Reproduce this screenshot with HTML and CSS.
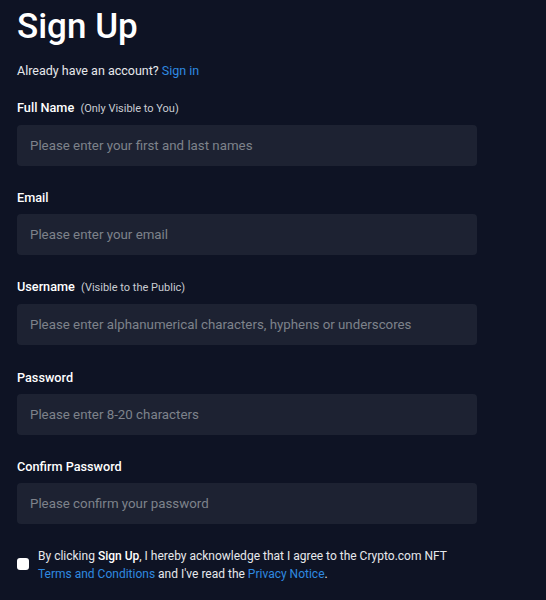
FILE: index.html
```html
<!DOCTYPE html>
<html lang="en">
<head>
    <meta charset="UTF-8">
    <meta name="viewport" content="width=device-width, initial-scale=1.0">
    <title>Sign Up</title>
    <link rel="stylesheet" href="styles.css">
</head>
<body>
    <main class="signup">
        <h1>Sign Up</h1>
        <p class="signin">Already have an account? <a href="#">Sign in</a></p>

        <form class="signup-form">
            <div class="field">
                <label for="fullname">Full Name <span class="hint">(Only Visible to You)</span></label>
                <input type="text" id="fullname" placeholder="Please enter your first and last names">
            </div>
            <div class="field">
                <label for="email">Email</label>
                <input type="text" id="email" placeholder="Please enter your email">
            </div>
            <div class="field">
                <label for="username">Username <span class="hint">(Visible to the Public)</span></label>
                <input type="text" id="username" placeholder="Please enter alphanumerical characters, hyphens or underscores">
            </div>
            <div class="field">
                <label for="password">Password</label>
                <input type="password" id="password" placeholder="Please enter 8-20 characters">
            </div>
            <div class="field">
                <label for="confirm">Confirm Password</label>
                <input type="password" id="confirm" placeholder="Please confirm your password">
            </div>

            <div class="agree">
                <span class="checkbox"></span>
                <p>By clicking <strong>Sign Up</strong>, I hereby acknowledge that I agree to the Crypto.com NFT <a href="#">Terms and Conditions</a> and I've read the <a href="#">Privacy Notice</a>.</p>
            </div>
        </form>
    </main>
</body>
</html>
```

FILE: styles.css
```css
body {
    font-family: Roboto, "Noto Sans", sans-serif;
    margin: 0;
    padding: 0;
    background-color: #0e1324;
    color: #fff;
}

a {
    color: #2f8ae0;
    text-decoration: none;
}

.signup {
    width: 460px;
    padding: 6px 17px 0;
}

.signup h1 {
    margin: 0;
    font-size: 35px;
    font-weight: 500;
    line-height: 42px;
}

.signin {
    margin: 15px 0 0;
    font-size: 12.5px;
    line-height: 16px;
    color: #e6e8ec;
}

.signup-form {
    margin-top: 21px;
}

.field {
    margin-bottom: 24.2px;
}

.field label {
    display: block;
    font-size: 12.7px;
    font-weight: 500;
    line-height: 16px;
    margin-bottom: 8px;
}

.field .hint {
    font-size: 11px;
    font-weight: 400;
    color: #c9ccd2;
    margin-left: 3px;
}

.field input {
    display: block;
    box-sizing: border-box;
    width: 460px;
    height: 41px;
    padding: 0 13px;
    border: none;
    border-radius: 4px;
    background-color: #1d2232;
    font-family: inherit;
    font-size: 13.3px;
    color: #fff;
    outline: none;
}

.field input::placeholder {
    color: #7e828b;
}

.agree {
    display: flex;
    align-items: flex-start;
    gap: 9px;
    margin-top: -1px;
}

.checkbox {
    flex: none;
    width: 12px;
    height: 12px;
    margin-top: 11px;
    background-color: #fff;
    border-radius: 3px;
}

.agree p {
    margin: 0;
    font-size: 12px;
    line-height: 18px;
    color: #e6e8ec;
}

.agree strong {
    color: #fff;
    font-weight: 500;
}
```
